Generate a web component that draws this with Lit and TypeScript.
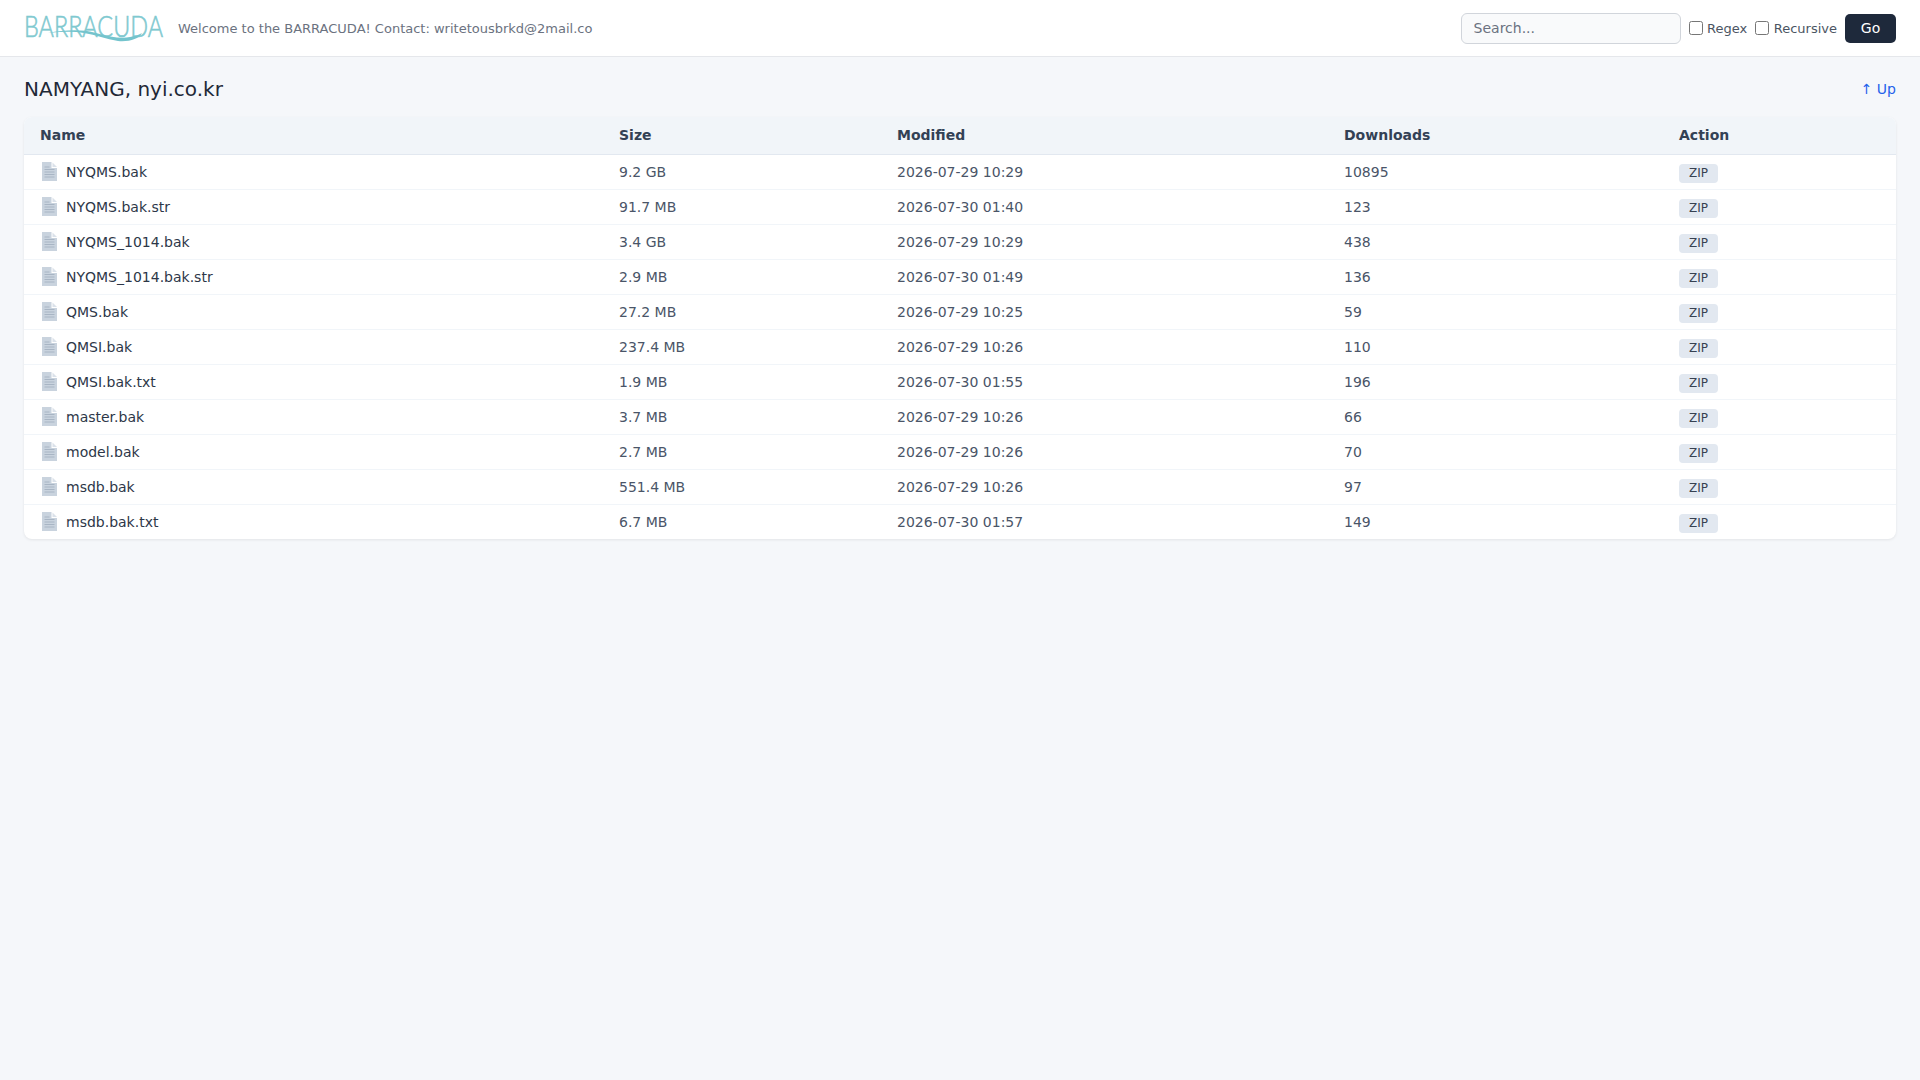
import { LitElement, html, css, svg } from 'lit';
import { customElement } from 'lit/decorators.js';

interface FileRow {
  name: string;
  size: string;
  modified: string;
  downloads: number;
}

const FILES: FileRow[] = [
  { name: 'NYQMS.bak', size: '9.2 GB', modified: '2026-07-29 10:29', downloads: 10895 },
  { name: 'NYQMS.bak.str', size: '91.7 MB', modified: '2026-07-30 01:40', downloads: 123 },
  { name: 'NYQMS_1014.bak', size: '3.4 GB', modified: '2026-07-29 10:29', downloads: 438 },
  { name: 'NYQMS_1014.bak.str', size: '2.9 MB', modified: '2026-07-30 01:49', downloads: 136 },
  { name: 'QMS.bak', size: '27.2 MB', modified: '2026-07-29 10:25', downloads: 59 },
  { name: 'QMSI.bak', size: '237.4 MB', modified: '2026-07-29 10:26', downloads: 110 },
  { name: 'QMSI.bak.txt', size: '1.9 MB', modified: '2026-07-30 01:55', downloads: 196 },
  { name: 'master.bak', size: '3.7 MB', modified: '2026-07-29 10:26', downloads: 66 },
  { name: 'model.bak', size: '2.7 MB', modified: '2026-07-29 10:26', downloads: 70 },
  { name: 'msdb.bak', size: '551.4 MB', modified: '2026-07-29 10:26', downloads: 97 },
  { name: 'msdb.bak.txt', size: '6.7 MB', modified: '2026-07-30 01:57', downloads: 149 },
];

const fileIcon = svg`<svg class="file-icon" width="15" height="19" viewBox="0 0 15 19">
  <path d="M0 0 h9.5 v6 h5.5 v13 h-15 z" fill="#c9d3de" />
  <path d="M10.5 0.5 l4.5 4.5 h-4.5 z" fill="#dbe2ea" />
  <path d="M2.5 5 h5 M2.5 7.5 h10 M2.5 10 h10 M2.5 12.5 h10 M2.5 15 h10" stroke="#a8b5c4" stroke-width="1" fill="none" />
</svg>`;

const logo = html`<svg class="logo" width="140" height="40" viewBox="0 0 140 40">
  <text x="0" y="29" class="logo-text" textLength="139" lengthAdjust="spacingAndGlyphs">BARRACUDA</text>
  <path d="M24 25 C40 22 58 21 72 25 C86 29 98 31 106 29 C111 28 115 27 118 25 C115 31 105 34 94 33 C82 31 72 27 60 25 C48 23 36 24 24 25 z" fill="#74c4cd" />
</svg>`;

@customElement('app-root')
export class AppRoot extends LitElement {
  static styles = css`
    :host {
      display: block;
      min-height: 1080px;
      background: #f5f7fa;
      color: #1f2937;
      font-family: 'DejaVu Sans', sans-serif;
      font-size: 14px;
    }

    .topbar {
      box-sizing: border-box;
      height: 57px;
      background: #fff;
      border-bottom: 1px solid #e5e7eb;
      padding: 0 24px;
      display: flex;
      align-items: center;
    }
    .logo {
      display: block;
      margin-right: 14px;
      flex: none;
      overflow: visible;
    }
    .logo-text {
      font-family: 'Lato', sans-serif;
      font-weight: 300;
      font-size: 29px;
      fill: #80c9d0;
      stroke: #80c9d0;
      stroke-width: 0.6px;
    }
    .welcome {
      font-size: 13px;
      color: #6b7280;
    }
    .search {
      margin-left: auto;
      display: flex;
      align-items: center;
      gap: 8px;
    }
    .search input[type='text'] {
      box-sizing: border-box;
      width: 220px;
      height: 31px;
      padding: 0 12px;
      font: 14px 'DejaVu Sans', sans-serif;
      color: #1f2937;
      background: #f9fafb;
      border: 1px solid #d1d5db;
      border-radius: 6px;
    }
    .search input::placeholder {
      color: #6b7280;
    }
    label {
      display: flex;
      align-items: center;
      gap: 4.5px;
      font-size: 13px;
      color: #4b5563;
    }
    label input {
      margin: 0;
      width: 14px;
      height: 14px;
    }
    .go {
      width: 51px;
      height: 29px;
      padding: 0;
      border: none;
      border-radius: 5px;
      background: #1e293b;
      color: #fff;
      font: 14px 'DejaVu Sans', sans-serif;
    }

    main {
      padding: 16px 24px;
    }
    .heading {
      display: flex;
      justify-content: space-between;
      align-items: center;
      height: 32px;
      margin-bottom: 12px;
    }
    h1 {
      margin: 0;
      font-size: 20px;
      font-weight: 400;
      color: #1f2937;
    }
    .up {
      font-size: 14px;
      color: #2563eb;
      text-decoration: none;
    }

    .card {
      background: #fff;
      border-radius: 8px;
      overflow: hidden;
      box-shadow: 0 1px 3px rgba(0, 0, 0, 0.08);
    }
    table {
      width: 100%;
      border-collapse: collapse;
      table-layout: fixed;
    }
    th {
      box-sizing: border-box;
      height: 37px;
      padding: 0 16px;
      text-align: left;
      font-size: 14px;
      font-weight: 700;
      color: #334155;
      background: #f1f5f9;
      border-bottom: 1px solid #e2e8f0;
    }
    td {
      box-sizing: border-box;
      height: 35px;
      padding: 0 16px;
      color: #4a5568;
      border-bottom: 1px solid #f1f5f9;
    }
    tr:last-child td {
      border-bottom: none;
    }
    .name {
      display: flex;
      align-items: center;
      gap: 9px;
      color: #2d3748;
    }
    .file-icon {
      flex: none;
      margin-left: 2px;
    }
    .zip {
      display: inline-block;
      vertical-align: -4px;
      padding: 2px 10px;
      font-size: 12px;
      line-height: 15px;
      color: #374151;
      background: #e2e8f0;
      border-radius: 4px;
    }
  `;

  render() {
    return html`
      <header class="topbar">
        ${logo}
        <span class="welcome">Welcome to the BARRACUDA! Contact: writetousbrkd@2mail.co</span>
        <form class="search" @submit=${(e: Event) => e.preventDefault()}>
          <input type="text" placeholder="Search..." />
          <label><input type="checkbox" />Regex</label>
          <label><input type="checkbox" />Recursive</label>
          <button class="go">Go</button>
        </form>
      </header>
      <main>
        <div class="heading">
          <h1>NAMYANG, nyi.co.kr</h1>
          <a class="up" href="#">↑ Up</a>
        </div>
        <div class="card">
          <table>
            <colgroup>
              <col style="width:579px" />
              <col style="width:278px" />
              <col style="width:447px" />
              <col style="width:335px" />
              <col />
            </colgroup>
            <thead>
              <tr>
                <th>Name</th>
                <th>Size</th>
                <th>Modified</th>
                <th>Downloads</th>
                <th>Action</th>
              </tr>
            </thead>
            <tbody>
              ${FILES.map(
                (f) => html`<tr>
                  <td><div class="name">${fileIcon}${f.name}</div></td>
                  <td>${f.size}</td>
                  <td>${f.modified}</td>
                  <td>${f.downloads}</td>
                  <td><span class="zip">ZIP</span></td>
                </tr>`
              )}
            </tbody>
          </table>
        </div>
      </main>
    `;
  }
}
